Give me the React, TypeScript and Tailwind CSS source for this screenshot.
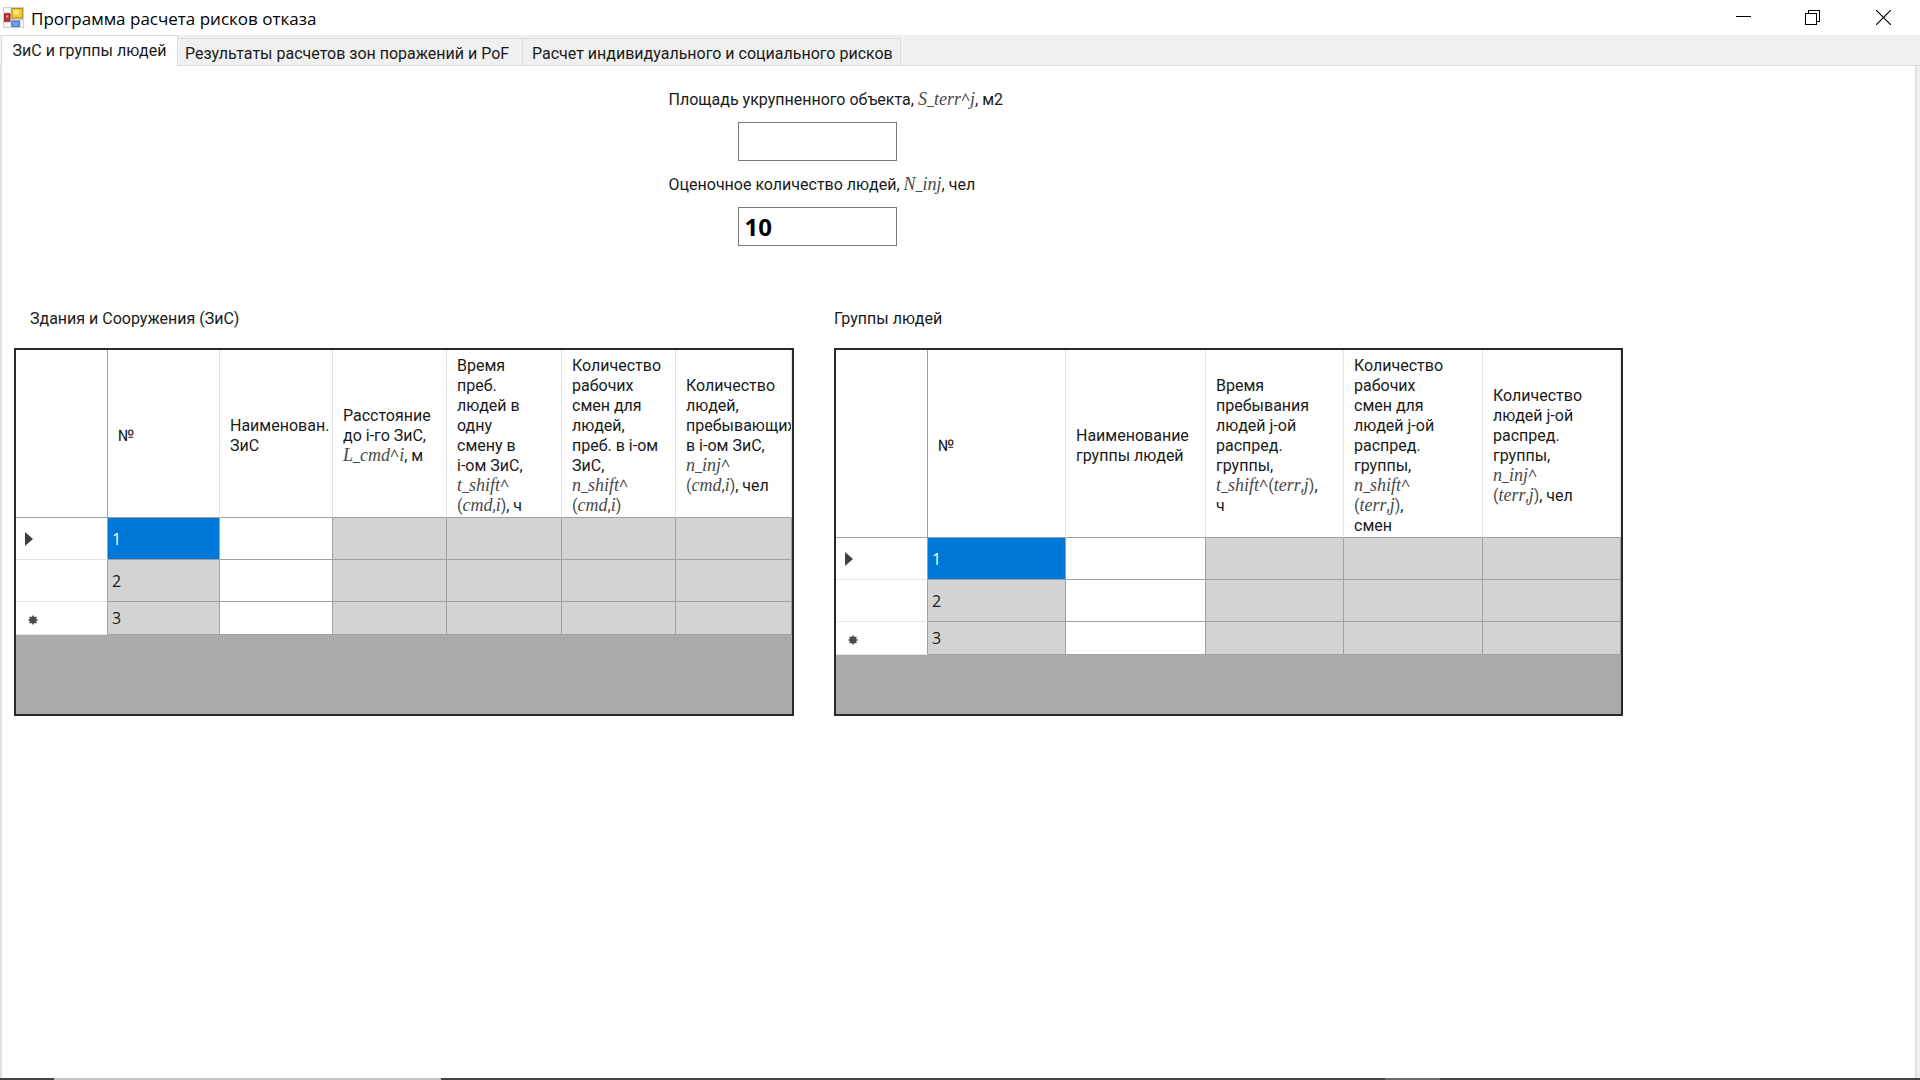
import { ReactNode } from "react";

function M({ children }: { children: string }) {
  return (
    <span className="leading-none text-[#4a4a4a]">
      {children.split(/([A-Za-z]+|[_^])/).map((part, i) =>
        /[A-Za-z]/.test(part) ? (
          <i key={i} className="font-['Liberation_Serif',serif] text-lg leading-none">{part}</i>
        ) : /[_^]/.test(part) ? (
          <span key={i} className="font-['Open_Sans',sans-serif] leading-none">{part}</span>
        ) : (
          part
        ),
      )}
    </span>
  );
}

type Column = { width: string; lines: ReactNode[]; readOnly: boolean };

const buildings: Column[] = [
  { width: "w-[112px]", lines: ["№"], readOnly: true },
  { width: "w-[113px]", lines: ["Наименован.", "ЗиС"], readOnly: false },
  {
    width: "w-[114px]",
    lines: ["Расстояние", "до i-го ЗиС,", <><M>L_cmd^i</M>, м</>],
    readOnly: true,
  },
  {
    width: "w-[115px]",
    lines: ["Время", "преб.", "людей в", "одну", "смену в", "i-ом ЗиС,", <M>t_shift^</M>, <><M>(cmd,i)</M>, ч</>],
    readOnly: true,
  },
  {
    width: "w-[114px]",
    lines: ["Количество", "рабочих", "смен для", "людей,", "преб. в i-ом", "ЗиС,", <M>n_shift^</M>, <M>(cmd,i)</M>],
    readOnly: true,
  },
  {
    width: "w-[116px]",
    lines: ["Количество", "людей,", "пребывающих", "в i-ом ЗиС,", <M>n_inj^</M>, <><M>(cmd,i)</M>, чел</>],
    readOnly: true,
  },
];

const groups: Column[] = [
  { width: "w-[138px]", lines: ["№"], readOnly: true },
  { width: "w-[140px]", lines: ["Наименование", "группы людей"], readOnly: false },
  {
    width: "w-[138px]",
    lines: ["Время", "пребывания", "людей j-ой", "распред.", "группы,", <><M>t_shift^(terr,j)</M>,</>, "ч"],
    readOnly: true,
  },
  {
    width: "w-[139px]",
    lines: ["Количество", "рабочих", "смен для", "людей j-ой", "распред.", "группы,", <M>n_shift^</M>, <><M>(terr,j)</M>,</>, "смен"],
    readOnly: true,
  },
  {
    width: "w-[138px]",
    lines: ["Количество", "людей j-ой", "распред.", "группы,", <M>n_inj^</M>, <><M>(terr,j)</M>, чел</>],
    readOnly: true,
  },
];

function RowMark({ row }: { row: number }) {
  if (row === 0)
    return (
      <svg className="ml-[9px] h-[14px] w-2" viewBox="0 0 8 14" aria-label="Текущая строка">
        <path d="M0 0 L8 7 L0 14 Z" fill="#3f3f3f" />
      </svg>
    );
  if (row === 2)
    return (
      <svg className="mt-[3px] ml-3 h-[10px] w-[10px]" viewBox="0 0 10 10" aria-label="Новая строка">
        <path d="M5 0.5V9.5M0.5 5H9.5M1.5 1.8L8.5 8.2M8.5 1.8L1.5 8.2" stroke="#6a6a6a" strokeWidth="1.8" />
        <circle cx="5" cy="5" r="3.4" fill="#4a4a4a" />
      </svg>
    );
  return null;
}

function Grid({ id, title, titleClass, headClass, columns }: {
  id: string;
  title: string;
  titleClass: string;
  headClass: string;
  columns: Column[];
}) {
  return (
    <section className="flex min-w-0 flex-col gap-[19px]" aria-labelledby={id}>
      <h2 id={id} className={titleClass}>{title}</h2>
      <div className="h-[368px] overflow-hidden border-2 border-[#2a2a2a] bg-[#ababab]">
        <table className="w-full table-fixed border-separate border-spacing-0" aria-labelledby={id}>
          <colgroup>
            <col className="w-[92px]" />
            {columns.map((c, i) => <col key={i} className={c.width} />)}
          </colgroup>
          <thead>
            <tr className={headClass}>
              <td className="border-r border-b border-[#a0a0a0] bg-white" />
              {columns.map((c, i) => (
                <th
                  key={i}
                  scope="col"
                  className="overflow-hidden border-r border-b border-r-[#e5e5e5] border-b-[#a0a0a0] bg-white p-0 pt-1 pl-[10px] text-left align-middle font-normal whitespace-nowrap"
                >
                  {c.lines.map((l, j) => <div key={j} className="h-5">{l}</div>)}
                </th>
              ))}
            </tr>
          </thead>
          <tbody>
            {[0, 1, 2].map((row) => (
              <tr key={row} className={row === 2 ? "h-[33px]" : "h-[42px]"}>
                <th className="border-r border-b border-r-[#a0a0a0] border-b-[#e5e5e5] bg-white p-0 align-middle">
                  <RowMark row={row} />
                </th>
                {columns.map((c, i) => (
                  <td
                    key={i}
                    className={
                      "border-r border-b border-[#a0a0a0] p-0 pl-1 align-middle font-['Open_Sans',sans-serif] " +
                      (i === 0 && row === 0 ? "bg-[#0078d7] text-white" : c.readOnly ? "bg-[#d3d3d3]" : "bg-white")
                    }
                  >
                    {i === 0 ? row + 1 : null}
                  </td>
                ))}
              </tr>
            ))}
          </tbody>
        </table>
      </div>
    </section>
  );
}

function TitleBar() {
  return (
    <header className="flex h-[35px] items-center bg-white pl-[3px]">
      <svg className="h-[21px] w-[21px]" viewBox="0 0 20 20" aria-hidden="true">
        <rect x="0" y="0" width="20" height="20" fill="#cfcfcf" />
        <rect x="1" y="1" width="6" height="4" fill="#fafafa" />
        <rect x="1" y="15" width="6" height="4" fill="#fafafa" />
        <rect x="17" y="13" width="2" height="6" fill="#fafafa" />
        <rect x="8" y="1" width="11" height="10" fill="#b98a10" />
        <rect x="9" y="2" width="9" height="8" fill="#f6c931" />
        <rect x="10" y="3" width="5" height="4" fill="#fde68a" />
        <rect x="1" y="6" width="6" height="8" fill="#8f1d1d" />
        <rect x="2" y="7" width="4" height="6" fill="#c9362c" />
        <rect x="3" y="8" width="2" height="2" fill="#ef9a8f" />
        <rect x="8" y="13" width="8" height="6" fill="#3a6fc9" />
        <rect x="9" y="14" width="6" height="4" fill="#6ea4f2" />
      </svg>
      <h1 className="ml-[7px] flex-1 pt-[2px] font-['Open_Sans',sans-serif] text-[17px] leading-6 text-black">
        Программа расчета рисков отказа
      </h1>
      <div className="flex h-full text-black">
        <button type="button" aria-label="Свернуть" className="flex w-[70px] items-center justify-center">
          <svg width="15" height="15" viewBox="0 0 15 15" shapeRendering="crispEdges"><path d="M0 6.5H15" stroke="currentColor" /></svg>
        </button>
        <button type="button" aria-label="Свернуть в окно" className="flex w-[68px] items-center justify-center">
          <svg width="15" height="15" viewBox="0 0 15 15" fill="none" stroke="currentColor" shapeRendering="crispEdges">
            <path d="M0.5 3.5H11.5V14.5H0.5Z M3.5 3.5V0.5H14.5V11.5H11.5" />
          </svg>
        </button>
        <button type="button" aria-label="Закрыть" className="flex w-[74px] items-center justify-center">
          <svg width="15" height="15" viewBox="0 0 15 15"><path d="M0 0L15 15M15 0L0 15" stroke="currentColor" strokeWidth="1.2" /></svg>
        </button>
      </div>
    </header>
  );
}

export default function App() {
  return (
    <div className="flex min-h-screen flex-col bg-[#f0f0f0] font-['Roboto','Liberation_Sans',sans-serif] text-[16px] leading-5 text-[#1a1a1a]">
      <TitleBar />
      <nav role="tablist" className="flex h-[31px] items-end border-b border-[#dcdcdc] pt-px pl-px">
        <button
          type="button"
          role="tab"
          aria-selected="true"
          className="-mb-px h-[31px] w-[177px] border border-b-0 border-[#dcdcdc] bg-white pb-px whitespace-nowrap"
        >
          ЗиС и группы людей
        </button>
        <button type="button" role="tab" aria-selected="false" className="h-[27px] w-[345px] border-t border-r border-[#dcdcdc] pt-[3px] pl-[7px] text-left whitespace-nowrap">
          Результаты расчетов зон поражений и PoF
        </button>
        <button type="button" role="tab" aria-selected="false" className="h-[27px] w-[378px] border-t border-r border-[#dcdcdc] pt-[3px] pl-[9px] text-left whitespace-nowrap">
          Расчет индивидуального и социального рисков
        </button>
      </nav>
      <main role="tabpanel" className="mr-[3px] flex-1 border-r-2 border-l-2 border-[#e2e2e2] bg-white">
        <form className="ml-[calc(35%-3px)] flex flex-col items-start pt-6">
          <label htmlFor="area" className="h-5">
            Площадь укрупненного объекта, <M>S_terr^j</M>, м2
          </label>
          <input
            id="area"
            className="mt-3 ml-[69px] h-[39px] w-[159px] border border-[#7a7a7a] bg-white px-[6px] font-['Open_Sans',sans-serif] text-2xl font-bold text-black"
          />
          <label htmlFor="people" className="mt-[14px] h-5">
            Оценочное количество людей, <M>N_inj</M>, чел
          </label>
          <input
            id="people"
            defaultValue="10"
            className="mt-3 ml-[69px] h-[39px] w-[159px] border border-[#7a7a7a] bg-white px-[6px] font-['Open_Sans',sans-serif] text-2xl font-bold text-black"
          />
        </form>
        <div className="mt-[63px] grid grid-cols-[minmax(0,780fr)_minmax(0,789fr)_minmax(0,252fr)] gap-10 pl-3">
          <Grid id="buildings" title="Здания и Сооружения (ЗиС)" titleClass="pl-4" headClass="h-[168px]" columns={buildings} />
          <Grid id="groups" title="Группы людей" titleClass="" headClass="h-[188px]" columns={groups} />
        </div>
      </main>
      <footer className="flex h-[2px] bg-[#444]">
        <div className="ml-[54px] w-[387px] bg-[#c2c2c2]" />
        <div className="ml-[944px] w-[55px] bg-[#6b6b6b]" />
      </footer>
    </div>
  );
}
